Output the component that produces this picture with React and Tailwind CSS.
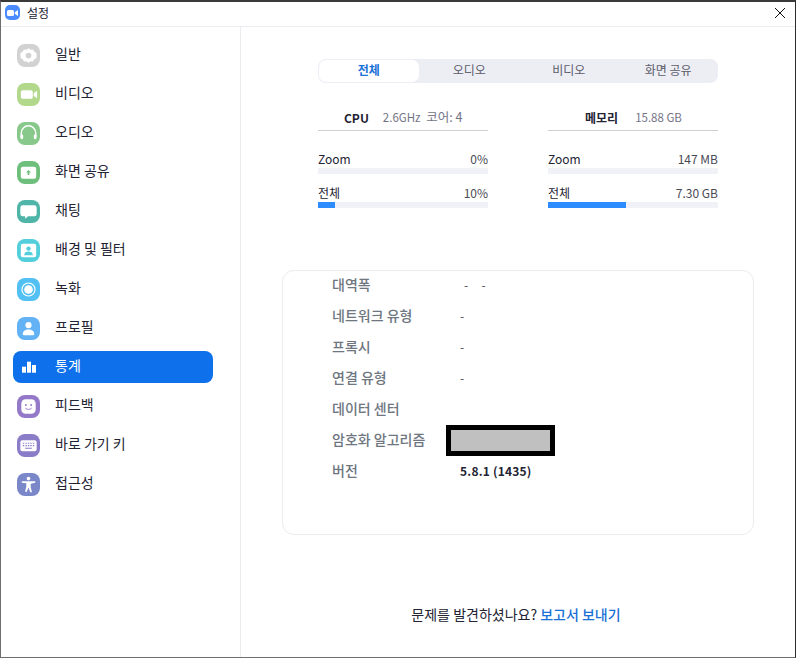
function IconBox({ color, children }) {
  return (
    <div className={`flex h-[23px] w-[23px] items-center justify-center rounded-[8px] ${color}`}>
      <svg width="23" height="23" viewBox="0 0 24 24" fill="white">{children}</svg>
    </div>
  );
}

const navItems = [
  {
    label: "일반",
    color: "bg-[#d2d2d2]",
    icon: (
      <path
        fillRule="evenodd"
        d="M12 4.5l2.2 1.4 2.6-.1 1.3 2.300 2.300 1.200v5.400l-2.300 1.200-1.300 2.300-2.600-.1L12 19.500l-2.200-1.400-2.600.1-1.300-2.300-2.300-1.200V9.300l2.300-1.200 1.300-2.300 2.600.1z M12 9a3 3 0 1 0 0 6a3 3 0 0 0 0-6z"
      />
    ),
  },
  {
    label: "비디오",
    color: "bg-[#b2d88c]",
    icon: <path d="M6 7.5h8.500a2 2 0 0 1 2 2v5a2 2 0 0 1-2 2H6a2 2 0 0 1-2-2v-5a2 2 0 0 1 2-2z M17.500 10.500l3.500-2.500v8l-3.500-2.500z" />,
  },
  {
    label: "오디오",
    color: "bg-[#88c98b]",
    icon: (
      <>
        <path d="M4.500 15v-3.500a7.500 7.500 0 0 1 15 0V15" fill="none" stroke="white" strokeWidth="1.500" />
        <rect x="3.500" y="13" width="3" height="5" rx="1.500" />
        <rect x="17.500" y="13" width="3" height="5" rx="1.500" />
      </>
    ),
  },
  {
    label: "화면 공유",
    color: "bg-[#6fbf7c]",
    icon: (
      <>
        <rect x="4" y="6" width="16" height="12.500" rx="2" />
        <path d="M12 9.500l2.500 2.500h-1.600v2.500h-1.800V12H9.500z" fill="#6fbf7c" />
      </>
    ),
  },
  {
    label: "채팅",
    color: "bg-[#4fb5a8]",
    icon: <path d="M6 5.500h12a2.500 2.500 0 0 1 2.500 2.500v6.500A2.500 2.500 0 0 1 18 17h-6.500l-3 2.500V17H6a2.500 2.500 0 0 1-2.500-2.500V8A2.500 2.500 0 0 1 6 5.500z" />,
  },
  {
    label: "배경 및 필터",
    color: "bg-[#53cfdc]",
    icon: (
      <>
        <rect x="4" y="5" width="16" height="14" rx="2" />
        <circle cx="12" cy="10" r="2.300" fill="#53cfdc" />
        <path d="M7.500 17c0-3 2-4 4.500-4s4.500 1 4.500 4z" fill="#53cfdc" />
      </>
    ),
  },
  {
    label: "녹화",
    color: "bg-[#52c0f2]",
    icon: (
      <>
        <circle cx="12" cy="12" r="6.800" fill="none" stroke="white" strokeWidth="1.200" />
        <circle cx="12" cy="12" r="4.500" />
      </>
    ),
  },
  {
    label: "프로필",
    color: "bg-[#62b2f5]",
    icon: (
      <>
        <circle cx="12" cy="8.500" r="3.200" />
        <path d="M6 18c0-3.500 2.500-5 6-5s6 1.500 6 5c0 .5-.5 1-1 1H7c-.5 0-1-.5-1-1z" />
      </>
    ),
  },
  {
    label: "통계",
    active: true,
    icon: (
      <>
        <rect x="5" y="11.700" width="4" height="6" />
        <rect x="10" y="6.700" width="4" height="11" />
        <rect x="15" y="10" width="4" height="7.700" />
      </>
    ),
  },
  {
    label: "피드백",
    color: "bg-[#9479c9]",
    icon: (
      <>
        <rect x="4.500" y="4.500" width="15" height="15" rx="4.500" />
        <circle cx="9.300" cy="10.500" r="1" fill="#9479c9" />
        <circle cx="14.700" cy="10.500" r="1" fill="#9479c9" />
        <path d="M9 14c1.500 1.500 4.500 1.500 6 0" fill="none" stroke="#9479c9" strokeWidth="1" strokeLinecap="round" />
      </>
    ),
  },
  {
    label: "바로 가기 키",
    color: "bg-[#8b7cc8]",
    icon: (
      <>
        <rect x="3.500" y="6.500" width="17" height="11.500" rx="2" />
        <path
          d="M6 9h1.500v1.300H6z M8.800 9h1.500v1.300H8.800z M11.300 9h1.500v1.300h-1.500z M13.800 9h1.500v1.300h-1.500z M16.500 9H18v1.300h-1.500z M6 11.500h1.500v1.300H6z M8.800 11.500h1.500v1.300H8.800z M11.300 11.500h1.500v1.300h-1.500z M13.800 11.500h1.500v1.300h-1.500z M16.500 11.500H18v1.300h-1.500z M8.500 14.300h7v1.200h-7z"
          fill="#8b7cc8"
        />
      </>
    ),
  },
  {
    label: "접근성",
    color: "bg-[#7a87c9]",
    icon: (
      <>
        <circle cx="12" cy="5.800" r="1.900" />
        <path d="M5 8.500h14v1.600l-4.700 1v3.400l1.300 5.500h-1.800L12 15l-1.800 4.500H8.400l1.300-5.500v-3.400L5 10.100z" />
      </>
    ),
  },
];

const tabs = ["전체", "오디오", "비디오", "화면 공유"];

const statRows = [
  { label: "대역폭", value: "-     -", valueClass: "pl-[4px]" },
  { label: "네트워크 유형", value: "-" },
  { label: "프록시", value: "-" },
  { label: "연결 유형", value: "-" },
  { label: "데이터 센터", value: "" },
  { label: "암호화 알고리즘", value: "", redacted: true },
  { label: "버전", value: "5.8.1 (1435)", valueClass: "font-bold tracking-[0.2px] text-[#232333]" },
];

function Usage({ label, value, percent }) {
  return (
    <div>
      <div className="flex h-[18px] items-center justify-between text-[12px] text-[#4a4a55]">
        <span className="text-[#232333]">{label}</span>
        <span>{value}</span>
      </div>
      <div className="h-[6px] bg-[#f1f2f7]">
        <div className="h-full bg-[#2d8cff]" style={{ width: `${percent}%` }} />
      </div>
    </div>
  );
}

function StatColumn({ title, detail, rows, titleClass, detailClass }) {
  return (
    <div className="w-[170px]">
      <div className={`flex h-[31px] items-center border-b border-[#cfcfd4] pt-[5px] text-[12px] ${titleClass}`}>
        <span className="font-bold text-[#232333]">{title}</span>
        <span className={`whitespace-pre text-[11.5px] text-[#747487] ${detailClass}`}>{detail}</span>
      </div>
      <div className="mt-[19px] flex flex-col gap-[10px]">
        {rows.map((r) => (
          <Usage key={r.label} {...r} />
        ))}
      </div>
    </div>
  );
}

export default function App() {
  return (
    <div
      className="flex h-[658px] w-[796px] flex-col overflow-hidden border border-t-[2px] border-[#3a3a3a] border-r-[#2b2b2b] border-b-[#6e6e6e] border-l-[#6e6e6e] bg-white text-[#232333]"
      style={{ fontFamily: '"Noto Sans CJK KR", "Noto Sans", sans-serif' }}
    >
      <div className="flex h-[25px] shrink-0 items-center justify-between border-b border-[#ececf0] pb-[3px] pl-[4px] pr-[9px]">
        <div className="flex items-center gap-[7px]">
          <div className="flex h-[15px] w-[15px] items-center justify-center rounded-[5px] bg-[#4a8cff]">
            <svg width="11" height="8" viewBox="0 0 11 8" fill="white">
              <rect x="0" y="1" width="7" height="6" rx="1.5" />
              <path d="M7.800 3.200L11 1v6L7.800 4.800z" />
            </svg>
          </div>
          <span className="text-[12px] leading-none">설정</span>
        </div>
        <svg width="12" height="12" viewBox="0 0 12 12" stroke="#111" strokeWidth="1" fill="none">
          <path d="M1 1l10 10M11 1L1 11" />
        </svg>
      </div>

      <div className="flex min-h-0 flex-1">
        <aside className="w-[240px] shrink-0 border-r border-[#ececf0] pl-[12px] pt-[12px]">
          {navItems.map((item) => (
            <div
              key={item.label}
              className={`mb-[7px] flex h-[32px] w-[200px] items-center rounded-[8px] pl-[4px] ${
                item.active ? "bg-[#0e71eb] text-white" : "text-[#232333]"
              }`}
            >
              {item.active ? (
                <svg width="24" height="24" viewBox="0 0 24 24" fill="white">{item.icon}</svg>
              ) : (
                <IconBox color={item.color}>{item.icon}</IconBox>
              )}
              <span className={`pb-[4px] text-[14px] leading-none ${item.active ? "ml-[14px]" : "ml-[15px]"}`}>{item.label}</span>
            </div>
          ))}
        </aside>

        <main className="flex flex-1 flex-col items-center">
          <div className="mt-[32px] flex h-[24px] w-[400px] rounded-[8px] bg-[#edeef4] text-[12px]">
            {tabs.map((t, i) => (
              <div
                key={t}
                className={`flex flex-1 items-center justify-center pb-[2px] ${
                  i === 0 ? "m-[1px] rounded-[7px] bg-white font-bold text-[#1a71d6]" : "text-[#5c5c6b]"
                }`}
              >
                {t}
              </div>
            ))}
          </div>

          <div className="mt-[17px] flex w-[400px] justify-between">
            <StatColumn
              title="CPU"
              detail={
                <>
                  2.6GHz <span className="ml-[3px] text-[12.5px]">코어: 4</span>
                </>
              }
              titleClass="pl-[26px]"
              detailClass="ml-[14px]"
              rows={[
                { label: "Zoom", value: "0%", percent: 0 },
                { label: "전체", value: "10%", percent: 10 },
              ]}
            />
            <StatColumn
              title="메모리"
              detail="15.88 GB"
              titleClass="pl-[37px]"
              detailClass="ml-[17px]"
              rows={[
                { label: "Zoom", value: "147 MB", percent: 0 },
                { label: "전체", value: "7.30 GB", percent: 46 },
              ]}
            />
          </div>

          <div className="mt-[62px] h-[265px] w-[472px] rounded-[12px] border border-[#ececf0] pl-[49px] text-[14px]">
            <div className="-mt-[2px]">
              {statRows.map((row) => (
                <div key={row.label} className="relative flex h-[31px] items-center">
                  <span className="w-[128px] font-medium text-[#6e7680]">{row.label}</span>
                  <span className={`whitespace-pre text-[12px] text-[#4a4a55] ${row.valueClass || ""}`}>{row.value}</span>
                  {row.redacted && (
                    <div className="absolute left-[114px] top-[1px] h-[31px] w-[109px] border-[5px] border-black bg-[#c0c0c0]" />
                  )}
                </div>
              ))}
            </div>
          </div>

          <div className="mr-[4px] mt-[69px] text-[14px] text-[#232333]">
            문제를 발견하셨나요? <span className="font-medium text-[#1a71d6]">보고서 보내기</span>
          </div>
        </main>
      </div>
    </div>
  );
}
